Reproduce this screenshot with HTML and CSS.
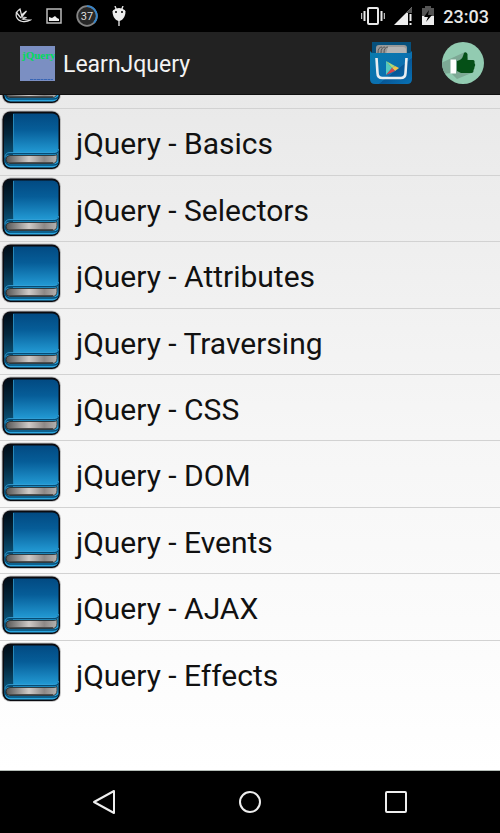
FILE: index.html
```html
<!DOCTYPE html>
<html lang="en">
<head>
<meta charset="utf-8">
<meta name="viewport" content="width=device-width, initial-scale=1">
<title>LearnJquery</title>
<link rel="stylesheet" href="styles.css">
</head>
<body>
<svg class="defs" aria-hidden="true">
  <defs>
    <linearGradient id="cover" x1="0" y1="0" x2="0" y2="1">
      <stop offset="0" stop-color="#024a82"/><stop offset=".3" stop-color="#065d98"/><stop offset=".72" stop-color="#2299d3"/><stop offset="1" stop-color="#2ba6e0"/>
    </linearGradient>
    <linearGradient id="spine" x1="0" y1="0" x2="0" y2="1">
      <stop offset="0" stop-color="#010d18"/><stop offset=".5" stop-color="#03263c"/><stop offset="1" stop-color="#0a5277"/>
    </linearGradient>
    <linearGradient id="pages" x1="0" y1="0" x2="1" y2="0">
      <stop offset="0" stop-color="#555"/><stop offset=".45" stop-color="#cfcac7"/><stop offset=".75" stop-color="#8d8886"/><stop offset="1" stop-color="#b5b2b0"/>
    </linearGradient>
    <symbol id="book" viewBox="0 0 60 60">
      <rect x=".5" y=".5" width="59.500" height="59.500" rx="9" fill="#777" opacity=".4"/>
      <rect x="1.500" y="1.500" width="57.500" height="57.500" rx="8" fill="#0b0b10"/>
      <rect x="3.500" y="3.500" width="54" height="54" rx="6" fill="url(#cover)"/>
      <path d="M12 3H9Q3 3 3 9V45H12Z" fill="url(#spine)"/>
      <path d="M12.500 4V44" stroke="#2688b9"/>
      <path d="M57.500 40q0 3.500-5 3.500H9q-5 0-5 5t4 6.500h44q4 0 5-2" fill="none" stroke="#064b73" stroke-width="1.500"/>
      <path d="M57.500 39q0 3.500-5 3.500H9q-5 0-5 5" fill="none" stroke="#36a4dc" stroke-width=".8"/>
      <path d="M56 44.500q-1 1-4 1H9q-4 0-4 4t4 4h42q5 0 5-5Z" fill="url(#pages)" stroke="#222" stroke-width=".8"/>
      <path d="M8 52.500h44" stroke="#4d4d4d" stroke-width="1.200"/>
    </symbol>
  </defs>
</svg>

<div class="status-bar">
  <div class="status-group notices">
    <svg width="18" height="18" viewBox="0 0 18 18" fill="none" stroke="#e4e4e4" stroke-width="1.200" aria-hidden="true"><path d="M6 2C3 4 1.500 7 2.500 10c2 5 9 6 14 3-3 0-6 0-8-1l4-1.500-5-.5 5-6-5 4Z"/><path d="M2 5l5 6"/></svg>
    <svg width="16" height="16" viewBox="0 0 16 16" aria-hidden="true"><path d="M1 1h14v14H1Z" fill="none" stroke="#bbb" stroke-width="1.500"/><path d="M3 13V9l3 1 3-2 2 2 2 1v2Z" fill="#eee"/></svg>
    <svg width="22" height="22" viewBox="0 0 22 22" aria-hidden="true"><circle cx="11" cy="11" r="9.800" fill="#272727" stroke="#858585" stroke-width="1.800"/><path d="M11 1.200a9.800 9.800 0 0 1 7 16.600" fill="none" stroke="#3485cc" stroke-width="1.800"/><text x="11" y="15" class="level">37</text></svg>
    <svg width="14" height="20" viewBox="0 0 14 20" aria-hidden="true"><path d="M3 0l1.500 4M11 0L9.500 4M7 14v6" stroke="#ddd" stroke-width="1.400"/><path d="M.5 5.500Q1 3 7 2q6 1 6.500 3.500C13.500 11 10 15 7 15S.5 11 .5 5.500Z" fill="#eee"/><circle cx="4" cy="6" r="1"/><circle cx="10" cy="6" r="1"/></svg>
  </div>
  <div class="status-group signals">
    <svg width="24" height="20" viewBox="0 0 24 20" fill="none" stroke="#e8e8e8" aria-hidden="true"><rect x="7" y="2" width="10" height="16" rx="1" stroke-width="2"/><path d="M3.500 5v10M20.500 5v10" stroke-width="2"/><path d="M.7 7v6M23.300 7v6"/></svg>
    <svg width="20" height="20" viewBox="0 0 20 20" aria-hidden="true"><path d="M19 1v6h-4v12H1Z" fill="#eee"/><path d="M19 1v6h-6Z" fill="#555"/><path d="M17.500 8v7M17.500 17v2" stroke="#eee" stroke-width="2"/></svg>
    <svg width="14" height="20" viewBox="0 0 14 20" aria-hidden="true"><path d="M4 0h6v2h3v8H1V2h3Z" fill="#555"/><path d="M1 10h12v9H1Z" fill="#eee"/><path d="M8 4l-5 7h4l-2 5 6-7H7Z"/></svg>
    <time class="clock">23:03</time>
  </div>
</div>

<header class="app-bar">
  <svg width="35" height="35" viewBox="0 0 35 35" aria-hidden="true"><rect width="35" height="35" fill="#7b8fc2"/><text x="2" y="13" class="logo-text">jQuery</text><path d="M10 33.500h23" stroke="#3865b5" stroke-dasharray="3 .5"/></svg>
  <h1 class="app-title">LearnJquery</h1>
  <button class="action" type="button" aria-label="More apps">
    <svg width="44" height="44" viewBox="0 0 44 44" aria-hidden="true">
      <defs><linearGradient id="bag" x1="0" y1="0" x2="1" y2="1"><stop offset="0" stop-color="#087cad"/><stop offset=".6" stop-color="#0b6fb0"/><stop offset=".61" stop-color="#075797"/><stop offset="1" stop-color="#0872b5"/></linearGradient></defs>
      <path d="M3 1h39v12H3Z" fill="#07507c"/>
      <rect x="7" y="4" width="31" height="12" rx="3" fill="#999"/><path d="M9 12q0-6 4-6M12 12q0-6 4-6M15 12q0-6 4-6" fill="none" stroke="#555"/><path d="M19 6h15q3 0 3 3v4H17Z" fill="#b4b4b4"/>
      <path d="M1 10l2 2h38l2-2v28q0 5-5 5H6q-5 0-5-5Z" fill="url(#bag)"/>
      <path d="M7.500 17l1 15q0 5 5 5h18q5 0 5-5l1-15" fill="none" stroke="#e8edf1" stroke-width="2.600"/>
      <path d="M17 20v14l6-7Z" fill="#55c9c0"/><path d="M17 20l9 5-3 2Z" fill="#a7d87a"/><path d="M26 25l4 2-4 3-3-3Z" fill="#f2c34b"/><path d="M23 27l3 3-9 4Z" fill="#d8454d"/>
    </svg>
  </button>
  <button class="action" type="button" aria-label="Like">
    <svg width="44" height="44" viewBox="0 0 44 44" aria-hidden="true">
      <defs><clipPath id="disc"><circle cx="22" cy="22" r="21"/></clipPath></defs>
      <circle cx="22" cy="22" r="21" fill="#92cbb1"/>
      <path d="M24 11L0 22v11l10-1 6 6 17-7Z" fill="#7da995" clip-path="url(#disc)"/>
      <path d="M9.500 18.500h5.500v14H9.500Z" fill="#fff"/>
      <path d="M16 20q5-1 6-5l1-3q2-2 3.500 1v6H32q2 0 1.500 3 1.500 2 0 4 0 2-1 3 0 3-2 3H20l-4-2Z" fill="#055017"/>
    </svg>
  </button>
</header>

<main class="content">
  <ul class="topics">
    <li class="topic"><svg class="book"><use href="#book"/></svg></li>
    <li class="topic"><svg class="book"><use href="#book"/></svg><a href="#basics">jQuery - Basics</a></li>
    <li class="topic"><svg class="book"><use href="#book"/></svg><a href="#selectors">jQuery - Selectors</a></li>
    <li class="topic"><svg class="book"><use href="#book"/></svg><a href="#attributes">jQuery - Attributes</a></li>
    <li class="topic"><svg class="book"><use href="#book"/></svg><a href="#traversing">jQuery - Traversing</a></li>
    <li class="topic"><svg class="book"><use href="#book"/></svg><a href="#css">jQuery - CSS</a></li>
    <li class="topic"><svg class="book"><use href="#book"/></svg><a href="#dom">jQuery - DOM</a></li>
    <li class="topic"><svg class="book"><use href="#book"/></svg><a href="#events">jQuery - Events</a></li>
    <li class="topic"><svg class="book"><use href="#book"/></svg><a href="#ajax">jQuery - AJAX</a></li>
    <li class="topic"><svg class="book"><use href="#book"/></svg><a href="#effects">jQuery - Effects</a></li>
  </ul>
</main>

<nav class="nav-bar" aria-label="System">
  <button type="button" aria-label="Back"><svg width="24" height="26" viewBox="0 0 24 26"><path d="M22 2v22L2 13Z"/></svg></button>
  <button type="button" aria-label="Home"><svg width="24" height="26" viewBox="0 0 24 26"><circle cx="12" cy="13" r="10"/></svg></button>
  <button type="button" aria-label="Recent apps"><svg width="24" height="26" viewBox="0 0 24 26"><rect x="2" y="3" width="20" height="20" rx="1"/></svg></button>
</nav>
</body>
</html>
```

FILE: styles.css
```css
* {
  box-sizing: border-box;
}

body {
  margin: 0;
  min-height: 100vh;
  display: flex;
  flex-direction: column;
  background: #000;
  font-family: Roboto, "Liberation Sans", sans-serif;
}

button {
  padding: 0;
  border: 0;
  background: none;
}

svg {
  display: block;
  flex: none;
}

.defs {
  position: absolute;
  width: 0;
  height: 0;
}

.status-bar {
  display: flex;
  justify-content: space-between;
  align-items: center;
  height: 32px;
  padding: 0 11px 0 14px;
  color: #e8e8e8;
}

.status-group {
  display: flex;
  align-items: center;
}

.notices {
  gap: 14px;
}

.signals {
  gap: 8px;
}

.level {
  fill: #ddd;
  font-size: 11px;
  text-anchor: middle;
}

.clock {
  font-size: 18px;
  font-weight: 500;
}

.app-bar {
  display: flex;
  align-items: center;
  height: 63px;
  padding: 0 15px 0 20px;
  background: #222;
  border-bottom: 1px solid #111;
}

.app-title {
  flex: 1;
  margin: 0;
  padding: 3px 0 0 8px;
  color: #f3f3f3;
  font-size: 23px;
  font-weight: 400;
}

.action + .action {
  margin-left: 28px;
}

.logo-text {
  fill: #00dc5a;
  font-family: "Liberation Serif", serif;
  font-size: 11px;
  font-weight: 700;
}

.content {
  flex: 1;
  display: flex;
  overflow: hidden;
  background: linear-gradient(#e9e9e9, #f6f6f6 50%, #fff);
  border-bottom: 1px solid #b5bdb8;
}

.topics {
  flex: 1;
  display: grid;
  grid-auto-rows: 1fr;
  margin: -52px 0 63px;
  padding: 0;
  list-style: none;
}

.topic {
  display: flex;
  padding: 1px 0 0 1px;
  border-bottom: 1px solid #d2d2d2;
}

.topic:last-child {
  border-bottom: 0;
}

.book {
  width: 60px;
  height: 60px;
}

.topic a {
  flex: 1;
  padding: 16px 0 0 15px;
  color: #111;
  font-size: 30px;
  line-height: 36px;
  text-decoration: none;
}

.nav-bar {
  display: flex;
  justify-content: space-between;
  height: 62px;
  padding: 0 92px;
}

.nav-bar svg {
  fill: none;
  stroke: #eee;
  stroke-width: 2;
  stroke-linejoin: round;
}
```
